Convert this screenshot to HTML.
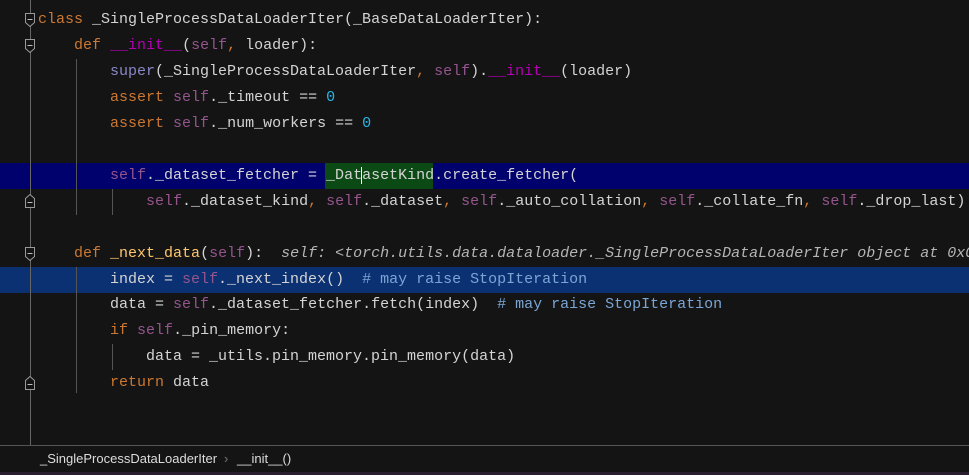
<!DOCTYPE html>
<html><head><meta charset="utf-8"><style>
body{margin:0;width:969px;height:475px;background:#141414;overflow:hidden;position:relative;font-family:"Liberation Mono",monospace;}
.l{position:absolute;left:38px;height:26px;line-height:26px;font-size:15px;color:#d4d4d4;white-space:pre;}
.k{color:#cc7832}.s{color:#94558d}.n{color:#2ab7e8}.m{color:#b300b3}.f{color:#ffc66d}.c{color:#7aa6d6}.p{color:#cc7832}.h{color:#b5b5b5;font-style:italic}
.hl{position:absolute;left:0;width:969px;height:26px}
.g{position:absolute;width:1px;background:#555}
svg.fold{position:absolute;left:24px;width:12px;height:14px}
</style></head><body>
<div class="hl" style="top:163px;background:#01016e"></div>
<div class="hl" style="top:267px;background:#0c3172"></div>
<div style="position:absolute;left:325px;top:163px;width:108px;height:26px;background:#0b4a14"></div>
<div class="g" style="left:30px;top:0;height:445px;background:#666"></div>
<div class="g" style="left:76px;top:59px;height:156px"></div>
<div class="g" style="left:112px;top:189px;height:26px"></div>
<div class="g" style="left:76px;top:267px;height:126px"></div>
<div class="g" style="left:112px;top:344px;height:26px"></div>
<svg class="fold" style="top:13px" viewBox="0 0 12 14"><path d="M1.5 0.5H10.5V9.5L6 13.5L1.5 9.5Z" fill="#141414" stroke="#999"/><path d="M3.5 6.5H8.5" stroke="#bbb"/></svg>
<svg class="fold" style="top:39px" viewBox="0 0 12 14"><path d="M1.5 0.5H10.5V9.5L6 13.5L1.5 9.5Z" fill="#141414" stroke="#999"/><path d="M3.5 6.5H8.5" stroke="#bbb"/></svg>
<svg class="fold" style="top:194px" viewBox="0 0 12 14"><path d="M1.5 13.5H10.5V4.5L6 0.5L1.5 4.5Z" fill="#141414" stroke="#999"/><path d="M3.5 8.5H8.5" stroke="#bbb"/></svg>
<svg class="fold" style="top:247px" viewBox="0 0 12 14"><path d="M1.5 0.5H10.5V9.5L6 13.5L1.5 9.5Z" fill="#141414" stroke="#999"/><path d="M3.5 6.5H8.5" stroke="#bbb"/></svg>
<svg class="fold" style="top:376px" viewBox="0 0 12 14"><path d="M1.5 13.5H10.5V4.5L6 0.5L1.5 4.5Z" fill="#141414" stroke="#999"/><path d="M3.5 8.5H8.5" stroke="#bbb"/></svg>
<div class="l" style="top:7px"><span class="k">class</span> _SingleProcessDataLoaderIter(_BaseDataLoaderIter):</div>
<div class="l" style="top:33px">    <span class="k">def</span> <span class="m">__init__</span>(<span class="s">self</span><span class="p">,</span> loader):</div>
<div class="l" style="top:59px">        <span class="s" style="color:#8888c6">super</span>(_SingleProcessDataLoaderIter<span class="p">,</span> <span class="s">self</span>).<span class="m">__init__</span>(loader)</div>
<div class="l" style="top:85px">        <span class="k">assert</span> <span class="s">self</span>._timeout == <span class="n">0</span></div>
<div class="l" style="top:111px">        <span class="k">assert</span> <span class="s">self</span>._num_workers == <span class="n">0</span></div>
<div class="l" style="top:163px">        <span class="s">self</span>._dataset_fetcher = _Dat<span style="border-left:1px solid #fff;margin-left:-1px"></span>asetKind.create_fetcher(</div>
<div class="l" style="top:189px">            <span class="s">self</span>._dataset_kind<span class="p">,</span> <span class="s">self</span>._dataset<span class="p">,</span> <span class="s">self</span>._auto_collation<span class="p">,</span> <span class="s">self</span>._collate_fn<span class="p">,</span> <span class="s">self</span>._drop_last)</div>
<div class="l" style="top:241px">    <span class="k">def</span> <span class="f">_next_data</span>(<span class="s">self</span>):  <span class="h">self: &lt;torch.utils.data.dataloader._SingleProcessDataLoaderIter object at 0x0</span></div>
<div class="l" style="top:267px">        index = <span class="s">self</span>._next_index()  <span class="c"># may raise StopIteration</span></div>
<div class="l" style="top:292px">        data = <span class="s">self</span>._dataset_fetcher.fetch(index)  <span class="c"># may raise StopIteration</span></div>
<div class="l" style="top:318px">        <span class="k">if</span> <span class="s">self</span>._pin_memory:</div>
<div class="l" style="top:344px">            data = _utils.pin_memory.pin_memory(data)</div>
<div class="l" style="top:370px">        <span class="k">return</span> data</div>
<div style="position:absolute;left:0;top:445px;width:969px;height:1px;background:#555"></div>
<div style="position:absolute;left:0;top:446px;width:969px;height:26px;background:#141414;font-family:'Liberation Sans',sans-serif;font-size:13px;color:#ddd;line-height:25px;white-space:pre"><span style="position:absolute;left:40px">_SingleProcessDataLoaderIter</span><span style="position:absolute;left:224px;color:#777">›</span><span style="position:absolute;left:237px">__init__()</span></div>
<div style="position:absolute;left:0;top:472px;width:969px;height:3px;background:#2a1f2e"></div>
</body></html>
